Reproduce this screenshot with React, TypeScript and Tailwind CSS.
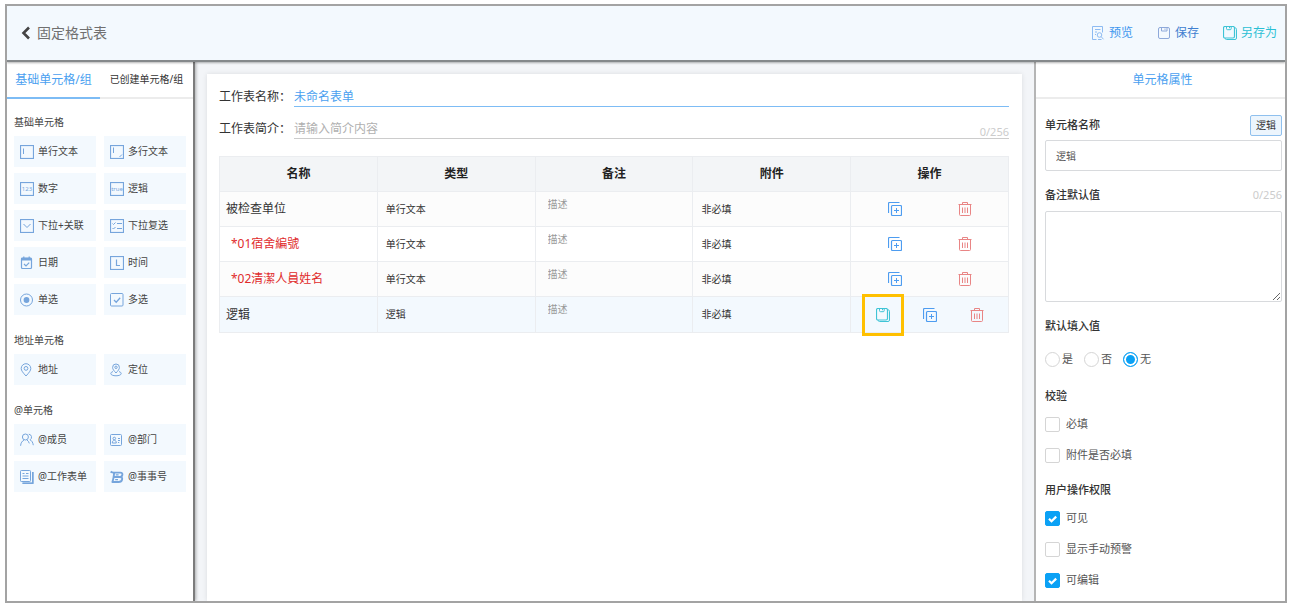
import { clsx } from 'clsx';
import { ReactNode, useState } from 'react';

type IconProps = { className?: string };

function Icon({ children, className }: { children: ReactNode; className?: string }) {
  return (
    <svg
      viewBox="0 0 14 14"
      fill="none"
      stroke="currentColor"
      aria-hidden="true"
      className={clsx('size-3.5 shrink-0', className)}
    >
      {children}
    </svg>
  );
}

function SaveIcon({ className }: IconProps) {
  return (
    <Icon className={className}>
      <rect x="1.5" y="1.5" width="11" height="11" rx="1.5" />
      <path d="M4.5 1.5v3.500h5.500V1.500M8 2.500v1.300" />
    </Icon>
  );
}

function SaveAsIcon({ className }: IconProps) {
  return (
    <Icon className={className}>
      <rect x=".5" y=".5" width="11" height="11.500" rx="1.500" strokeWidth="1.200" />
      <path d="M3.500.5v2.200a1 1 0 0 0 1 1h2.700a1 1 0 0 0 1-1V.5M6.500.8v1.400" />
      <path d="M11.800 1.800c1.100 0 1.700.5 1.700 1.500v8.700a1.500 1.500 0 0 1-1.500 1.500H3.500c-.9 0-1.400-.5-1.500-1.400" />
    </Icon>
  );
}

function PreviewIcon({ className }: IconProps) {
  return (
    <Icon className={className}>
      <path d="M5.500 13.500H1.500v-13h10v6M4 3.500h5.500M4 6h2M4 8.500h1" />
      <circle cx="8.500" cy="9" r="2.300" />
      <path d="m10.200 10.700 2.300 2.600M7 13.500h3.500" />
    </Icon>
  );
}

function CopyIcon() {
  return (
    <Icon className="text-[#4d9cf0]">
      <rect x="3.500" y="3.500" width="10" height="10" rx="1" strokeWidth="1.200" />
      <path d="M.5 11V1.500a1 1 0 0 1 1-1H11.500" strokeWidth="1.200" />
      <path d="M8.500 6v5M6 8.500h5" />
    </Icon>
  );
}

function TrashIcon() {
  return (
    <Icon className="text-[#e98585]">
      <path d="M.5 2.500h13M4.500 2.500v-2h5v2M1.500 3v9.500a1 1 0 0 0 1 1h9a1 1 0 0 0 1-1V3" />
      <path d="M4.500 5.500V11M7 5.500V11M9.500 5.500V11" />
    </Icon>
  );
}

const frame = <rect x=".5" y=".5" width="13" height="13" strokeWidth="1.200" />;

const groups = [
  {
    title: '基础单元格',
    items: [
      { name: '单行文本', icon: <>{frame}<path d="M3.500 3.500v5.500" /></> },
      { name: '多行文本', icon: <>{frame}<path d="M3.500 2.500v5.500M12 9.500 9.500 12" /></> },
      {
        name: '数字',
        icon: (
          <>
            {frame}
            <text x="7" y="9" fontSize="6" textAnchor="middle" fill="currentColor" stroke="none">123</text>
          </>
        ),
      },
      {
        name: '逻辑',
        icon: (
          <>
            {frame}
            <text x="7" y="9" fontSize="6" textAnchor="middle" fill="currentColor" stroke="none">true</text>
          </>
        ),
      },
      { name: '下拉+关联', icon: <>{frame}<path d="m3.500 5 3.500 3.500L10.500 5" /></> },
      {
        name: '下拉复选',
        icon: <>{frame}<path d="m2.500 4.500 1 1 2-2M2.500 9l1 1 2-2M7 4.500h5M7 9.500h5" /></>,
      },
      {
        name: '日期',
        icon: (
          <>
            <rect x="1.500" y="2" width="10" height="10.500" rx="1" strokeWidth="1.200" />
            <path d="M1.500 3.200h10" strokeWidth="2.600" />
            <path d="M3.800.6v2M9.200.6v2M4 8l2 2 3.200-3.400" strokeWidth="1.200" />
          </>
        ),
      },
      { name: '时间', icon: <>{frame}<path d="M6.500 3.500v6H10" strokeWidth="1.200" /></> },
      {
        name: '单选',
        icon: (
          <>
            <circle cx="6.500" cy="7" r="6" />
            <circle cx="6.500" cy="7" r="2.900" fill="currentColor" stroke="none" />
          </>
        ),
      },
      {
        name: '多选',
        icon: <><rect x=".5" y=".5" width="12.500" height="12.500" rx="1" /><path d="m4 7 2.200 2.200 4-4.400" strokeWidth="1.300" /></>,
      },
    ],
  },
  {
    title: '地址单元格',
    items: [
      {
        name: '地址',
        icon: (
          <>
            <path d="M6 13C3 9.700 1.200 7.600 1.200 5.500a4.800 4.800 0 0 1 9.600 0C10.800 7.600 9 9.700 6 13Z" />
            <circle cx="6" cy="5.400" r="1.900" />
          </>
        ),
      },
      {
        name: '定位',
        icon: (
          <>
            <path d="M6 10C3.800 7.600 2.600 6.200 2.600 4.400a3.400 3.400 0 0 1 6.800 0C9.400 6.200 8.200 7.600 6 10Z" />
            <circle cx="6" cy="4.300" r="1.200" />
            <path d="M3 8.600C1.500 9 .8 9.700.8 10.600c0 1.300 2.300 2.200 5.200 2.200s5.200-.9 5.200-2.200c0-.9-.7-1.600-2.200-2" />
          </>
        ),
      },
    ],
  },
  {
    title: '@单元格',
    items: [
      {
        name: '@成员',
        icon: (
          <>
            <circle cx="5.400" cy="4" r="3" />
            <path d="M.6 12.800c.2-3 1.600-4.900 3.300-5.500M8.800 1.200a3 3 0 0 1 1.200 5.600c1.800.8 2.900 2.700 3.300 5.400M6.800 6.800c1.300.9 2.100 2.100 2.500 3.600" />
          </>
        ),
      },
      {
        name: '@部门',
        icon: (
          <>
            <rect x=".5" y="1.500" width="11" height="11" rx="1" />
            <circle cx="4.300" cy="5.500" r="1.300" />
            <path d="M2.300 10c0-3.800 4-3.800 4 0ZM8 5.500h2M8 7.500h2M8 9.500h1.200" />
          </>
        ),
      },
      {
        name: '@工作表单',
        icon: (
          <>
            <rect x=".5" y=".5" width="10" height="11" rx=".8" />
            <path d="M2.500 3.500h2M2.500 6h6M2.500 8.500h6M6 3.500h2.500M12.800 2v11.200H2.500" />
            <path d="M12.800 2v11.200H2.500" strokeWidth="1.600" />
          </>
        ),
      },
      {
        name: '@事事号',
        icon: (
          <g strokeWidth="1.900" strokeLinejoin="round">
            <path d="M.6 1.600c1.200.8 2 1 3.200 1h6.400c1.900 0 2.500 1 2.100 2.400-.3 1.300-1.100 2-2.700 2H3.200" />
            <path d="M9.600 7c2.200 0 2.900 1 2.500 2.500-.4 1.700-1.500 2.500-3.400 2.500H2.400c.6-1.600.9-3.200 1.300-5.200l.4-4" />
            <path d="M5.800 4.800h2.800M5.200 9.600h2.800" strokeWidth="1.200" />
          </g>
        ),
      },
    ],
  },
];

const columns = ['名称', '类型', '备注', '附件', '操作'];

const rows = [
  { name: '被检查单位', type: '单行文本' },
  { name: '*01宿舍編號', type: '单行文本', required: true },
  { name: '*02清潔人員姓名', type: '单行文本', required: true },
  { name: '逻辑', type: '逻辑', selected: true },
];

export default function App() {
  return (
    <div className="h-screen pt-1 pr-[7px] pb-2 pl-[5px] bg-white font-['Noto_Sans','Noto_Sans_CJK_SC',sans-serif] text-[#333]">
      <div className="h-full flex flex-col border-2 border-[#a3a3a3] overflow-hidden">
        <Header />
        <div className="flex flex-1 min-h-0 bg-[#f3f5f8]">
          <Sidebar />
          <main className="flex-1 min-w-0 flex pt-3 pl-3 pr-3">
            <Sheet />
          </main>
          <Properties />
        </div>
      </div>
    </div>
  );
}

function Header() {
  return (
    <header className="relative z-10 flex items-center justify-between h-14 pl-3.5 pr-2 bg-[#f3f9fe] border-b-2 border-[#85898b] shadow-[0_1px_2px_rgba(0,0,0,0.3)] shrink-0">
      <button type="button" className="flex items-center gap-1.5 text-sm text-[#707070]">
        <svg viewBox="0 0 10 14" className="w-2.5 h-3.5" fill="none" stroke="#444" strokeWidth="2.600" aria-hidden="true">
          <path d="M8 1.500 2.500 7 8 12.500" />
        </svg>
        固定格式表
      </button>
      <div className="flex items-center gap-6 text-xs">
        <button type="button" className="flex items-center gap-1 text-[#4097ee]">
          <PreviewIcon className="text-[#8dbbf2]" />
          预览
        </button>
        <button type="button" className="flex items-center gap-1 text-[#3f7fd0]">
          <SaveIcon className="text-[#8ea9da]" />
          保存
        </button>
        <button type="button" className="flex items-center gap-1 text-[#2abfd4]">
          <SaveAsIcon className="text-[#3fc4d6]" />
          另存为
        </button>
      </div>
    </header>
  );
}

function Sidebar() {
  const [tab, setTab] = useState(0);

  return (
    <aside className="w-[188px] shrink-0 bg-white border-r-2 border-[#7c7c7c] shadow-[1px_0_3px_rgba(0,0,0,0.3)]">
      <div className="flex h-[37px] border-b-2 border-[#ececec]">
        {['基础单元格/组', '已创建单元格/组'].map((name, i) => (
          <button
            key={name}
            type="button"
            onClick={() => setTab(i)}
            className={clsx(
              'flex-1 -mb-0.5 border-b-2 whitespace-nowrap',
              tab === i ? 'text-xs text-[#4a9ff0] border-[#7dbcf5]' : 'text-[10px] border-transparent'
            )}
          >
            {name}
          </button>
        ))}
      </div>
      <div className="flex flex-col gap-[17px] pt-[15px] px-[7px]">
        {groups.map((group) => (
          <section key={group.title}>
            <h3 className="text-[10px] leading-4 mb-1.5 text-[#444]">{group.title}</h3>
            <div className="grid grid-cols-2 gap-x-2 gap-y-1.5">
              {group.items.map((item) => (
                <button
                  key={item.name}
                  type="button"
                  className="flex items-center gap-1 h-[31px] pl-1.5 bg-[#f3f9fe] text-[10px] text-[#444] whitespace-nowrap"
                >
                  <Icon className="text-[#76a5dc]">{item.icon}</Icon>
                  {item.name}
                </button>
              ))}
            </div>
          </section>
        ))}
      </div>
    </aside>
  );
}

function Sheet() {
  return (
    <div className="flex-1 min-w-0 bg-white shadow-[0_0_5px_rgba(0,0,0,0.1)] pt-[13px] pl-3 pr-[13px]">
      <div className="flex flex-col gap-3 text-xs">
        <div className="flex h-5">
          <label htmlFor="sheet-name" className="shrink-0 w-[75px] leading-5">工作表名称：</label>
          <div className="flex flex-1 min-w-0 border-b border-[#7dbcf5]">
            <input
              id="sheet-name"
              defaultValue="未命名表单"
              className="flex-1 min-w-0 text-[#4a9ff0] outline-none"
            />
          </div>
        </div>
        <div className="flex h-5">
          <label htmlFor="sheet-intro" className="shrink-0 w-[75px] leading-5">工作表简介：</label>
          <div className="flex flex-1 min-w-0 items-end border-b border-[#ccc]">
            <input
              id="sheet-intro"
              placeholder="请输入简介内容"
              className="flex-1 min-w-0 h-full placeholder:text-[#b0b0b0] outline-none"
            />
            <span className="text-[11px] leading-3 text-[#ccc]">0/256</span>
          </div>
        </div>
      </div>

      <table className="w-full mt-[17px] table-fixed border-collapse">
        <thead>
          <tr className="h-[35px] bg-[#f3f5f7]">
            {columns.map((name) => (
              <th key={name} className="border border-[#ebedf0] text-xs font-bold text-[#222]">{name}</th>
            ))}
          </tr>
        </thead>
        <tbody>
          {rows.map((row) => (
            <tr
              key={row.name}
              className={clsx(
                row.selected ? 'h-9 bg-[#f3f9fe]' : 'h-[35px] odd:bg-[#fcfcfc]'
              )}
            >
              <td
                className={clsx(
                  'border border-[#ebedf0] text-xs py-0',
                  row.required ? 'pl-[11px] text-[#e02b2b]' : 'pl-1.5'
                )}
              >
                {row.name}
              </td>
              <td className="border border-[#ebedf0] pl-2 py-0 text-[10px]">{row.type}</td>
              <td className="border border-[#ebedf0] p-0 align-top">
                <input
                  aria-label={`${row.name} 备注`}
                  placeholder="描述"
                  className="block w-full h-6 pl-3 text-[10px] bg-transparent placeholder:text-[#999] outline-none"
                />
              </td>
              <td className="border border-[#ebedf0] pl-2 py-0 text-[10px]">非必填</td>
              <td className="border border-[#ebedf0] p-0">
                <div className={clsx('flex justify-center', row.selected ? 'gap-[33px]' : 'gap-14')}>
                  {row.selected && (
                    <button type="button" aria-label="另存为" className="relative">
                      <SaveAsIcon className="text-[#3fc4d6]" />
                      <span className="absolute -inset-3.5 border-3 border-[#ffc000]" />
                    </button>
                  )}
                  <button type="button" aria-label="复制"><CopyIcon /></button>
                  <button type="button" aria-label="删除"><TrashIcon /></button>
                </div>
              </td>
            </tr>
          ))}
        </tbody>
      </table>
    </div>
  );
}

function Properties() {
  return (
    <aside className="w-[251px] shrink-0 bg-white border-l-2 border-[#b5b5b5] text-[11px] text-[#555]">
      <h2 className="h-[37px] flex items-center justify-center pl-1 border-b-2 border-[#ececec] text-xs text-[#4a9ff0]">
        单元格属性
      </h2>
      <div className="pl-[9px] pr-[3px] pt-4">
        <div className="flex items-center justify-between">
          <label htmlFor="cell-name" className="font-medium text-[#333]">单元格名称</label>
          <button
            type="button"
            className="h-[21px] px-[5px] border border-[#8fc0ee] rounded-xs bg-[#ecf5fd] text-[10px] text-[#333]"
          >
            逻辑
          </button>
        </div>
        <input
          id="cell-name"
          defaultValue="逻辑"
          className="block w-full h-[31px] mt-1 px-2.5 border border-[#d8dadd] rounded-xs text-[10px] outline-none"
        />

        <div className="flex items-center justify-between mt-4 leading-4">
          <label htmlFor="cell-note" className="font-medium text-[#333]">备注默认值</label>
          <span className="text-[#ccc]">0/256</span>
        </div>
        <textarea
          id="cell-note"
          className="block w-full h-[91px] mt-2 border border-[#d8dadd] rounded-xs outline-none"
        />

        <fieldset className="mt-4">
          <legend className="leading-4 font-medium text-[#333]">默认填入值</legend>
          <div className="flex gap-[11px] mt-[18px]">
            <Radio label="是" />
            <Radio label="否" />
            <Radio label="无" checked />
          </div>
        </fieldset>

        <fieldset className="mt-[21px]">
          <legend className="leading-4 font-medium text-[#333]">校验</legend>
          <div className="flex flex-col gap-4 mt-[13px]">
            <Checkbox label="必填" />
            <Checkbox label="附件是否必填" />
          </div>
        </fieldset>

        <fieldset className="mt-[19px]">
          <legend className="leading-4 font-medium text-[#333]">用户操作权限</legend>
          <div className="flex flex-col gap-4 mt-[13px]">
            <Checkbox label="可见" checked />
            <Checkbox label="显示手动预警" />
            <Checkbox label="可编辑" checked />
          </div>
        </fieldset>
      </div>
    </aside>
  );
}

function Radio({ label, checked }: { label: string; checked?: boolean }) {
  return (
    <label className="flex items-center gap-0.5 h-[15px]">
      <input
        type="radio"
        name="default-value"
        defaultChecked={checked}
        className="appearance-none size-[15px] rounded-full border border-[#d5d5d5] checked:border-[#0ba1f5] checked:bg-[#0ba1f5] checked:shadow-[inset_0_0_0_2px_#fff]"
      />
      {label}
    </label>
  );
}

function Checkbox({ label, checked }: { label: string; checked?: boolean }) {
  return (
    <label className="flex items-center gap-1.5 h-[15px]">
      <span className="grid size-[15px]">
        <input
          type="checkbox"
          defaultChecked={checked}
          className="peer col-start-1 row-start-1 appearance-none size-[15px] rounded-xs border border-[#d5d5d5] checked:border-[#0ba1f5] checked:bg-[#0ba1f5]"
        />
        <svg
          viewBox="0 0 15 15"
          className="col-start-1 row-start-1 pointer-events-none invisible peer-checked:visible"
          fill="none"
          stroke="#fff"
          strokeWidth="2.200"
          aria-hidden="true"
        >
          <path d="m4 7.800 2.500 2.500 4.700-4.700" />
        </svg>
      </span>
      {label}
    </label>
  );
}
